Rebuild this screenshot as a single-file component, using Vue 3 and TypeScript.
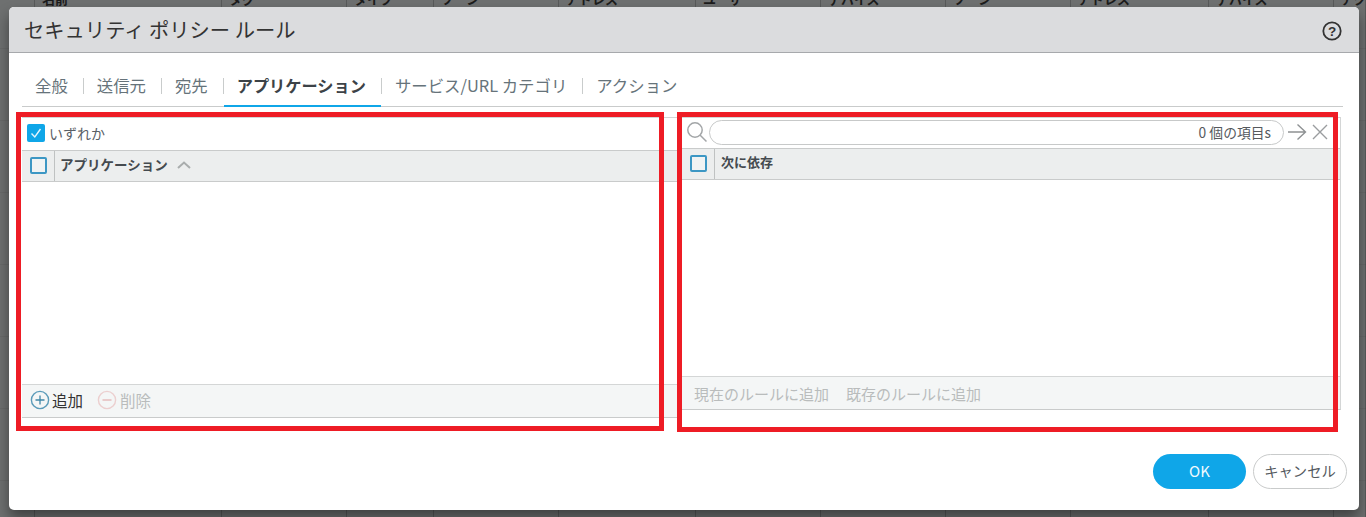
<script setup lang="ts">
const bgCols: { label: string; w: number }[] = [
  { label: '', w: 35 },
  { label: '名前', w: 187 },
  { label: 'タグ', w: 125 },
  { label: 'タイプ', w: 87 },
  { label: 'ゾーン', w: 125 },
  { label: 'アドレス', w: 137 },
  { label: 'ユーザー', w: 125 },
  { label: 'デバイス', w: 125 },
  { label: 'ゾーン', w: 125 },
  { label: 'アドレス', w: 138 },
  { label: 'デバイス', w: 125 },
  { label: 'アクション', w: 32 },
]
const tabs = ['全般', '送信元', '宛先', 'アプリケーション', 'サービス/URL カテゴリ', 'アクション']
const activeTab = 3
</script>

<template>
  <div class="page">
    <div class="backdrop">
      <div v-for="(c, i) in bgCols" :key="i" class="bg-col" :style="{ width: c.w + 'px' }">
        <span class="bg-label">{{ c.label }}</span>
      </div>
    </div>

    <section class="dialog">
      <header class="dlg-head">
        <h1 class="dlg-title">セキュリティ ポリシー ルール</h1>
        <svg class="help" width="20" height="20" viewBox="0 0 20 20">
          <circle cx="10" cy="10" r="8.7" fill="none" stroke="#333" stroke-width="1.8" />
          <text x="10" y="14.6" text-anchor="middle" class="help-q">?</text>
        </svg>
      </header>

      <div class="dlg-body">
        <nav class="tabs">
          <template v-for="(t, i) in tabs" :key="t">
            <span v-if="i > 0" class="tab-sep" />
            <span class="tab" :class="{ active: i === activeTab }">{{ t }}</span>
          </template>
        </nav>

        <div class="panes">
          <div class="pane left">
            <div class="any-row">
              <span class="check checked">
                <svg width="18" height="18" viewBox="0 0 18 18">
                  <path d="M4.5 9.5 L7.8 13 L13.5 5" fill="none" stroke="#e4f5fd" stroke-width="1.4" />
                </svg>
              </span>
              <span class="any-label">いずれか</span>
            </div>
            <div class="grid-head">
              <span class="head-check"><span class="check box" /></span>
              <span class="head-title">アプリケーション</span>
              <svg class="sort" width="14" height="8" viewBox="0 0 14 8">
                <path d="M1 7 L7 1.5 L13 7" fill="none" stroke="#a9adad" stroke-width="2" />
              </svg>
            </div>
            <div class="grid-body" />
            <div class="grid-foot">
              <span class="act">
                <svg width="20" height="20" viewBox="0 0 20 20">
                  <circle cx="10" cy="10" r="8.6" fill="none" stroke="#5b9bb9" stroke-width="1.4" />
                  <path d="M10 5.5 V14.5 M5.5 10 H14.5" stroke="#3f87a8" stroke-width="1.3" />
                </svg>
                <span class="act-text">追加</span>
              </span>
              <span class="act off">
                <svg width="20" height="20" viewBox="0 0 20 20">
                  <circle cx="10" cy="10" r="8.6" fill="none" stroke="#eccfcf" stroke-width="1.4" />
                  <path d="M5.5 10 H14.5" stroke="#e6bcbc" stroke-width="1.3" />
                </svg>
                <span class="act-text">削除</span>
              </span>
            </div>
          </div>

          <div class="pane right">
            <div class="search-row">
              <svg class="glass" width="22" height="22" viewBox="0 0 22 22">
                <circle cx="9" cy="9" r="7.2" fill="none" stroke="#a3a6a8" stroke-width="1.5" />
                <path d="M14 14 L20.5 20.5" stroke="#a3a6a8" stroke-width="1.5" />
              </svg>
              <div class="search-box">0 個の項目s</div>
              <svg class="tool arrow" width="20" height="18" viewBox="0 0 20 18">
                <path d="M1 9 H18.5 M10.5 1.5 L18.5 9 L10.5 16.5" fill="none" stroke="#8e9193" stroke-width="1.4" />
              </svg>
              <svg class="tool" width="18" height="18" viewBox="0 0 18 18">
                <path d="M2 2 L16 16 M16 2 L2 16" fill="none" stroke="#9a9d9f" stroke-width="1.4" />
              </svg>
            </div>
            <div class="grid-head">
              <span class="head-check r"><span class="check box" /></span>
              <span class="head-title r">次に依存</span>
            </div>
            <div class="grid-body" />
            <div class="grid-foot r">
              <span class="dis">現在のルールに追加</span>
              <span class="dis">既存のルールに追加</span>
            </div>
          </div>
        </div>

        <footer class="dlg-foot">
          <button class="btn ok">OK</button>
          <button class="btn cancel">キャンセル</button>
        </footer>
      </div>
    </section>

    <div class="mark mark-l" />
    <div class="mark mark-r" />
  </div>
</template>

<style>
html, body { margin: 0; padding: 0; overflow: hidden; }
</style>

<style scoped>
.page {
  position: relative;
  width: 1366px;
  height: 517px;
  overflow: hidden;
  background-color: #6e7070;
  background-image: linear-gradient(to bottom, transparent 71px, rgba(0, 0, 0, 0.05) 71px);
  background-size: 100% 72px;
  background-position: 0 49px;
  font-family: "Noto Sans CJK JP", "Liberation Sans", sans-serif;
}
.backdrop {
  display: flex;
  height: 517px;
  overflow: hidden;
}
.bg-col {
  box-sizing: border-box;
  flex: none;
  height: 100%;
  padding-left: 7px;
  border-right: 1px solid rgba(40, 40, 40, 0.3);
  overflow: hidden;
}
.bg-label {
  display: block;
  margin-top: -8px;
  font-size: 13px;
  font-weight: 700;
  line-height: 13px;
  color: #1c1c1c;
  white-space: nowrap;
}
.dialog {
  position: absolute;
  left: 9px;
  top: 7px;
  width: 1350px;
  height: 503px;
  display: flex;
  flex-direction: column;
  background: #fff;
  border-radius: 5px;
  overflow: hidden;
  box-shadow: 0 8px 14px rgba(0, 0, 0, 0.42);
}
.dlg-head {
  flex: none;
  box-sizing: border-box;
  height: 46px;
  display: flex;
  align-items: center;
  justify-content: space-between;
  padding: 0 17px 0 15px;
  background: #dbdcde;
  border-bottom: 1px solid #a7a9ac;
}
.dlg-title {
  margin: 0;
  font-size: 20.3px;
  font-weight: 400;
  color: #333;
  line-height: 40px;
  position: relative;
  top: -1px;
}
.help { flex: none; position: relative; top: 1px; }
.help-q {
  font: 700 13.5px "Liberation Sans", sans-serif;
  fill: #333;
}
.dlg-body {
  flex: 1;
  display: flex;
  flex-direction: column;
  min-height: 0;
  padding: 0 12px 0 13px;
}
.tabs {
  flex: none;
  box-sizing: border-box;
  height: 54px;
  margin-right: 4px;
  display: flex;
  align-items: flex-end;
  border-bottom: 1px solid #c9cbcb;
}
.tab {
  box-sizing: border-box;
  height: 31px;
  padding: 0 15px 0 13px;
  font-size: 16.4px;
  line-height: 18px;
  color: #66737a;
  white-space: nowrap;
  margin-bottom: -1px;
}
.tab.active {
  font-size: 16.2px;
  font-weight: 700;
  color: #3c4247;
  border-bottom: 2px solid #0fa6e8;
}
.tab-sep {
  flex: none;
  width: 1px;
  height: 16px;
  margin-bottom: 12px;
  background: #c9cccc;
}
.panes {
  flex: none;
  height: 300px;
  display: flex;
  gap: 4px;
  padding-top: 10px;
}
.pane {
  box-sizing: border-box;
  display: flex;
  flex-direction: column;
  min-width: 0;
}
.pane.left {
  flex: none;
  width: 655px;
  height: 301px;
  border-top: 1px solid #d4d6d6;
  border-bottom: 1px solid #c9cbcb;
}
.pane.right {
  flex: none;
  width: 660px;
  height: 293px;
  border-left: 1px solid #d4d6d6;
  border-right: 1px solid #d4d6d6;
  border-bottom: 1px solid #c9cbcb;
}
.any-row {
  flex: none;
  box-sizing: border-box;
  height: 32px;
  display: flex;
  align-items: center;
  padding: 0 0 2px 5px;
  gap: 4px;
}
.check {
  box-sizing: border-box;
  display: inline-flex;
  width: 18px;
  height: 18px;
  border-radius: 2px;
}
.check.checked { background: #0fa6e8; }
.check.box {
  width: 17px;
  height: 17px;
  border: 2px solid #3c97c4;
  border-radius: 2px;
  background: #f0f3f3;
  position: relative;
  top: -1px;
}
.any-label {
  font-size: 14px;
  color: #5a6066;
}
.grid-head {
  flex: none;
  box-sizing: border-box;
  display: flex;
  align-items: center;
  height: 32px;
  background: #eceeee;
  border-top: 1px solid #c9cbcb;
  border-bottom: 1px solid #c9cbcb;
}
.head-check {
  flex: none;
  box-sizing: border-box;
  width: 33px;
  height: 100%;
  display: flex;
  align-items: center;
  padding-left: 8px;
  border-right: 1px solid #bfc2c2;
}
.head-title {
  padding: 0 0 4px 5px;
  font-size: 13.5px;
  font-weight: 700;
  color: #444a4f;
  white-space: nowrap;
}
.head-title.r { padding: 0 0 6px 6px; font-size: 13px; }
.sort { margin-left: 9px; position: relative; top: -1px; }
.grid-body { flex: 1; min-height: 0; background: #fff; }
.grid-foot {
  flex: none;
  box-sizing: border-box;
  height: 33px;
  display: flex;
  align-items: center;
  padding: 0 0 2px 8px;
  gap: 14px;
  background: #f4f6f6;
  border-top: 1px solid #d4d6d6;
}
.grid-foot.r { padding: 0 0 0 12px; gap: 17px; }
.act { display: inline-flex; align-items: center; gap: 2px; }
.act-text { font-size: 15.5px; color: #333; }
.act.off { gap: 3px; }
.act.off .act-text { color: #b9bcbc; }
.dis { font-size: 15px; color: #b9bcbc; white-space: nowrap; }
.search-row {
  flex: none;
  height: 31px;
  box-sizing: border-box;
  display: flex;
  align-items: center;
  padding: 0 0 2px 4px;
  border-top: 1px solid #d4d6d6;
}
.glass { flex: none; margin-right: 1px; }
.search-box {
  flex: none;
  box-sizing: border-box;
  width: 575px;
  height: 25px;
  border: 1px solid #c7c9c9;
  border-radius: 13px;
  padding-right: 12px;
  font-size: 13.8px;
  line-height: 23px;
  text-align: right;
  color: #55595d;
  background: #fff;
  white-space: nowrap;
}
.tool { flex: none; margin-left: 4px; }
.tool.arrow { margin-left: 3px; }
.dlg-foot {
  flex: 1;
  display: flex;
  justify-content: flex-end;
  align-items: flex-start;
  gap: 7px;
  padding-top: 37px;
  min-height: 0;
}
.btn {
  box-sizing: border-box;
  height: 35px;
  border-radius: 18px;
  font-family: inherit;
  font-size: 14.3px;
  padding: 0 0 3px;
  margin: 0;
}
.btn.ok {
  width: 93px;
  background: #0fa6e8;
  border: none;
  color: #f2fafe;
  font-size: 15px;
}
.btn.cancel {
  width: 94px;
  background: #fff;
  border: 1px solid #c9cbcb;
  color: #555a5f;
}
.mark {
  position: absolute;
  box-sizing: border-box;
  border: 5px solid #ee1c25;
  pointer-events: none;
}
.mark-l { left: 16px; top: 112px; width: 648px; height: 319px; }
.mark-r { left: 677px; top: 112px; width: 661px; height: 320px; }
</style>
